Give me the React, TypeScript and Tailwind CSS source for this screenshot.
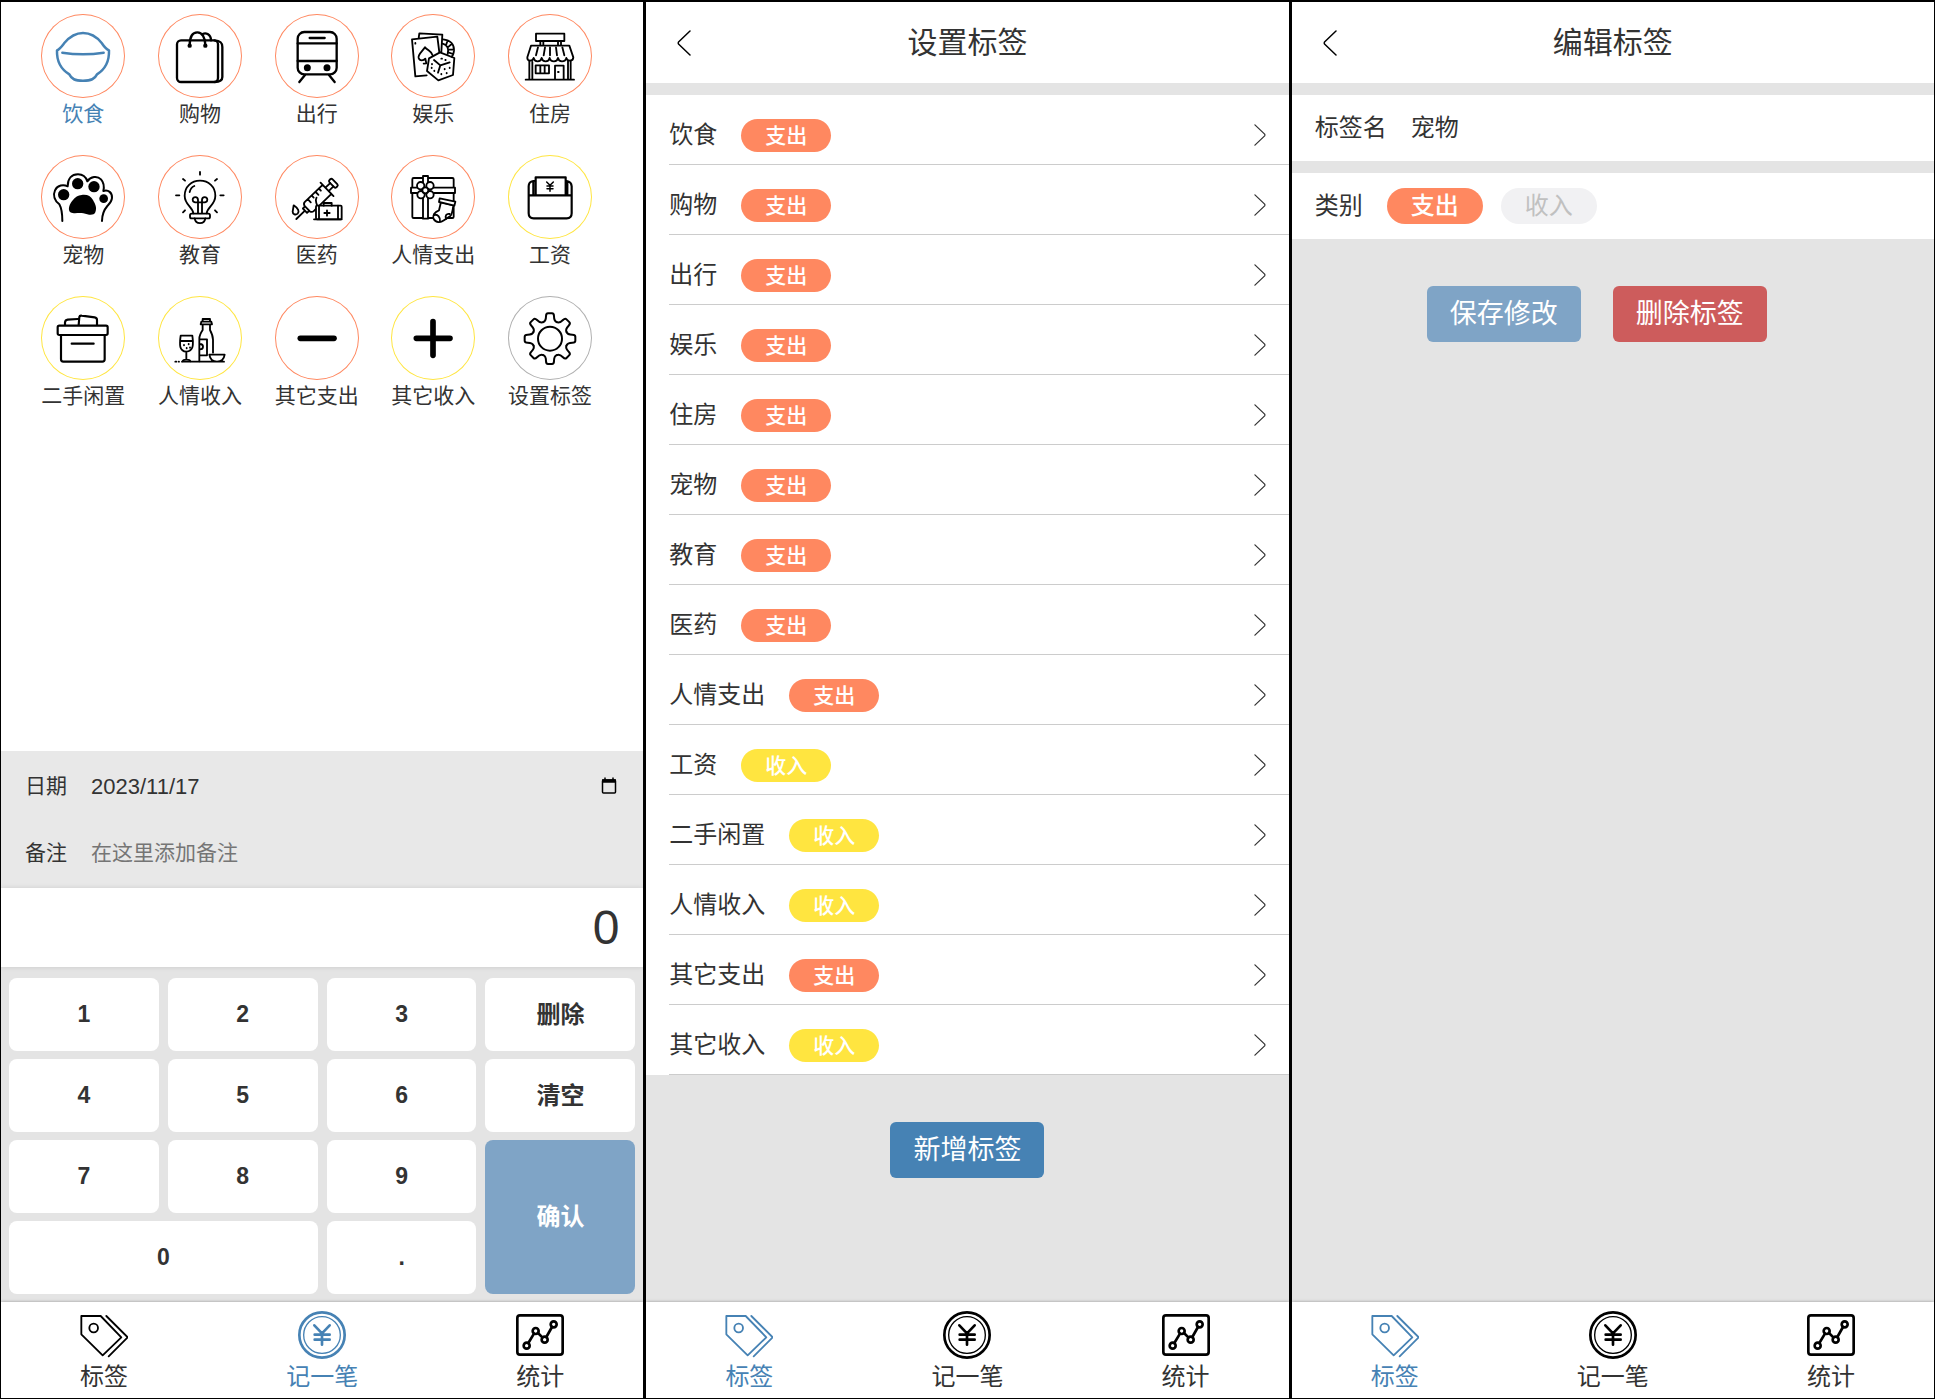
import { useState, type ReactNode } from "react";

type Kind = "支出" | "收入";

function TagSvg({ box, children, width = 6 }: { box: string; children: ReactNode; width?: number }) {
  return (
    <svg
      viewBox={box}
      className="size-full"
      fill="none"
      stroke="currentColor"
      strokeWidth={width}
      strokeLinecap="round"
      strokeLinejoin="round"
      aria-hidden="true"
    >
      {children}
    </svg>
  );
}

const BowlIcon = () => (
  <TagSvg box="123 42 252 252" width={7.5}>
    <path d="M187 158Q249 168 311 158" />
    <path d="M171 151C180 147 186 138 193 129C210 109 228 99 249 99C271 99 289 109 305 129C311 138 318 147 327 151C328 180 318 206 291 223C284 237 274 242 249 242C224 242 215 237 208 223C180 206 170 180 171 151Z" />
  </TagSvg>
);

const BagIcon = () => (
  <TagSvg box="474 42 252 252" width={7}>
    <rect x="531" y="121" width="123" height="125" rx="12" />
    <path d="M644 121C664 122 667 130 667 141V231Q667 246 644 246" />
    <path d="M569 136C569 110 578 97 592 97C606 97 616 112 616 136M608 102C614 99 619 100 623 102C630 106 633 112 633 121" />
    <circle cx="569" cy="137" r="3" />
    <circle cx="616" cy="137" r="3" />
  </TagSvg>
);

const TrainIcon = () => (
  <TagSvg box="14 12 252 252" width={7}>
    <rect x="82" y="66" width="117" height="127" rx="20" />
    <path d="M82 100H199M82 153H199M118 84H163M104 195L87 216M176 195L193 216" />
    <circle cx="111" cy="173" r="7" fill="currentColor" />
    <circle cx="170" cy="173" r="7" fill="currentColor" />
  </TagSvg>
);

const GamesIcon = () => (
  <TagSvg box="215 42 252 252" width={5.5}>
    <path d="M298 114L300 100L369 104L366 156M322 226L288 229L278 118L354 110L360 157" />
    <path d="M317 142C307 157 295 162 298 174C301 184 313 182 318 176L321 190M317 142C326 152 338 155 340 166M313 191L321 190" />
    <path d="M362 157L405 174L401 225L357 241L323 213L329 175Z" />
    <path d="M344 180L363 196L391 187M363 196L356 218" />
    <path d="M371 118C395 120 405 135 404 152C403 160 402 166 397 170M370 131C384 135 390 146 385 162M385 121L381 133M397 132L388 140M404 148L390 149M401 162L389 158" />
    <path d="M366 176h2M378 180h1M338 192v1M337 203v1M345 212v1M366 222v1M382 219v1M376 207v1M391 203v1M288 129v2" />
  </TagSvg>
);

const ShopIcon = () => (
  <TagSvg box="565 42 252 252" width={5.5}>
    <rect x="649" y="101" width="85" height="22" />
    <path d="M662 123v13M671 123v13M715 123v13M724 123v13M634 137H749L761 172Q761 182 751 182Q742 182 740 174Q738 184 727 184Q717 184 715 174Q713 184 703 184Q692 184 690 174Q688 184 678 184Q668 184 666 174Q664 184 654 184Q644 184 642 174Q640 182 631 182Q622 181 623 172Z" />
    <path d="M655 142L649 166M676 142L672 166M691 142V166M709 142L712 166M728 142L734 166" />
    <path d="M629 184V238M638 186V238M745 184V238M753 184V238M618 239H763M706 238V197H732V238M648 196H688V220H648ZM662 196V220M675 196V220M715 216h2" />
  </TagSvg>
);

const PawIcon = () => (
  <TagSvg box="123 465 252 252" width={6}>
    <path d="M187 663C187 640 186 627 178 613C164 602 158 586 165 571C173 555 190 553 203 559C203 536 215 523 234 523C250 523 258 532 262 544C272 529 292 527 303 538C312 548 313 560 310 573C325 568 337 578 336 594C335 606 328 612 322 618C310 632 306 645 306 663" />
    <g fill="currentColor" stroke="none">
      <circle cx="191" cy="584" r="17" />
      <circle cx="233" cy="551" r="17" />
      <circle cx="282" cy="560" r="17" />
      <circle cx="311" cy="596" r="13" />
      <path d="M245 585C262 583 272 588 279 600C285 611 292 622 286 637C281 648 266 645 250 640C235 637 224 643 211 637C202 628 209 612 217 602C226 591 234 586 245 585Z" />
    </g>
  </TagSvg>
);

const BulbIcon = () => (
  <TagSvg box="474 465 252 252" width={5.5}>
    <path d="M580 640C578 620 554 615 554 587C554 560 574 542 600 542C626 542 646 560 646 587C646 615 622 620 620 640M569 576C571 567 576 561 583 558M584 655C587 674 613 674 616 655" />
    <rect x="570" y="641" width="60" height="14" rx="5" />
    <path d="M594 639V600C594 589 578 589 578 599C578 607 586 608 594 607H606C614 608 622 607 622 599C622 589 606 589 606 600V639" />
    <path d="M600 516v8M549 537l6 5M651 537l-6 5M528 586h10M661 586h10M549 637l6-6M651 637l-6-6" />
  </TagSvg>
);

const MedicineIcon = () => (
  <TagSvg box="14 434 252 252" width={5.5}>
    <g transform="translate(78 626) rotate(-44)">
      <path d="M0 0H36M36 -9H45V9H36ZM45 -11Q47 -19 54 -19H128V19H54Q47 19 45 11ZM128 -28V28M128 -7H148M128 7H148M66 -19V-6M82 -19V-10M98 -19V-6M112 -19V-10M70 19C80 4 76 0 88 -4" />
      <rect x="148" y="-15" width="13" height="30" rx="5" />
    </g>
    <path d="M70 585C84 594 88 604 82 610C76 615 67 612 67 604Z" />
    <rect x="137" y="586" width="77" height="41" rx="3" fill="white" />
    <path d="M160 586V578H184V586M203 586V627M146 586V627M162 608H178M170 600V616M131 627H214" />
  </TagSvg>
);

const GiftIcon = () => (
  <TagSvg box="215 465 252 252" width={5.5}>
    <rect x="279" y="534" width="124" height="120" rx="4" />
    <rect x="311" y="528" width="15" height="128" fill="white" />
    <rect x="275" y="563" width="132" height="16" fill="white" />
    <g fill="white">
      <circle cx="304" cy="557" r="11" />
      <circle cx="332" cy="557" r="11" />
      <circle cx="305" cy="584" r="11" />
      <circle cx="332" cy="584" r="11" />
      <circle cx="318" cy="571" r="9" />
      <path d="M365 606L359 631C345 636 339 647 343 657C350 669 364 668 374 661L393 648C400 640 400 628 402 616Z" />
      <path d="M361 595L408 605L405 617L359 606Z" />
    </g>
    <path d="M345 645C355 642 364 652 362 665M381 656C376 648 381 640 391 642" />
  </TagSvg>
);

const WalletIcon = () => (
  <TagSvg box="565 465 252 252" width={6.5}>
    <path d="M648 543H641Q627 545 627 559V640Q627 655 642 655H741Q756 655 756 640V559Q755 545 741 543H738M627 586H756M648 586V532H738V586M641 545V586M743 545V586" />
    <path d="M681 546L691 556L701 546M691 556V574M682 558h18M682 566h18" strokeWidth="4.500" />
  </TagSvg>
);

const BoxIcon = () => (
  <TagSvg box="123 78 252 252" width={6.5}>
    <rect x="173" y="167" width="150" height="28" rx="5" />
    <path d="M183 195V268Q183 275 190 275H307Q314 275 314 268V195M215 221H281M195 165V157Q196 150 203 149L233 147M236 165L238 141Q239 136 245 137L284 142Q291 143 291 150V165" />
  </TagSvg>
);

const WineIcon = () => (
  <TagSvg box="474 78 252 252" width={5.5}>
    <path d="M542 197H577C581 225 580 243 559 245C538 243 538 225 542 197ZM540 213H579M559 245V268M548 274C550 267 569 267 571 274M552 225v1M566 222v1M560 234v1M570 232v1" />
    <path d="M608 155V147H630V155M604 155H634L636 163H602ZM608 165V180C600 192 598 198 598 206V274M630 165V180C637 193 639 199 639 209V248M598 208H621V256H598M600 222C612 222 612 238 600 238" />
    <path d="M628 254H674C672 267 664 275 651 275C638 275 630 267 628 254ZM546 275H672M526 275h3M536 275h1" />
  </TagSvg>
);

const MinusIcon = () => (
  <TagSvg box="0 2 252 252" width={17}>
    <path d="M76 129H177" />
  </TagSvg>
);

const PlusIcon = () => (
  <TagSvg box="0 2 252 252" width={17}>
    <path d="M76 129H177M126 79V180" />
  </TagSvg>
);

const GearIcon = () => (
  <TagSvg box="-126 -128 252 252" width={6}>
    <circle r="36" />
    {[0, 45, 90, 135, 180, 225, 270, 315].map((angle) => (
      <path
        key={angle}
        transform={`rotate(${angle})`}
        d="M-20.5 -49.5C-13 -52 -12 -58 -12 -67Q-12 -76 -6 -76H6Q12 -76 12 -67C12 -58 13 -52 20.5 -49.5"
      />
    ))}
  </TagSvg>
);

function Chevron({ direction }: { direction: "left" | "right" }) {
  return (
    <svg
      viewBox="0 0 14 26"
      className={direction === "left" ? "h-[26px] w-[14px]" : "h-[22px] w-3"}
      fill="none"
      stroke="currentColor"
      strokeWidth="1.5"
      strokeLinecap="round"
      strokeLinejoin="round"
      aria-hidden="true"
    >
      <path d={direction === "left" ? "M13 1L1.500 12Q1 13 1.500 14L13 25" : "M1 1L12.500 12Q13 13 12.500 14L1 25"} />
    </svg>
  );
}

const tags: { name: string; kind: Kind; icon: () => ReactNode }[] = [
  { name: "饮食", kind: "支出", icon: BowlIcon },
  { name: "购物", kind: "支出", icon: BagIcon },
  { name: "出行", kind: "支出", icon: TrainIcon },
  { name: "娱乐", kind: "支出", icon: GamesIcon },
  { name: "住房", kind: "支出", icon: ShopIcon },
  { name: "宠物", kind: "支出", icon: PawIcon },
  { name: "教育", kind: "支出", icon: BulbIcon },
  { name: "医药", kind: "支出", icon: MedicineIcon },
  { name: "人情支出", kind: "支出", icon: GiftIcon },
  { name: "工资", kind: "收入", icon: WalletIcon },
  { name: "二手闲置", kind: "收入", icon: BoxIcon },
  { name: "人情收入", kind: "收入", icon: WineIcon },
  { name: "其它支出", kind: "支出", icon: MinusIcon },
  { name: "其它收入", kind: "收入", icon: PlusIcon },
];

function TagButton({
  name,
  ring,
  active,
  onClick,
  children,
}: {
  name: string;
  ring: string;
  active?: boolean;
  onClick?: () => void;
  children: ReactNode;
}) {
  return (
    <button type="button" onClick={onClick} className={`flex flex-col items-center ${active ? "text-[#4682b4]" : "text-black"}`}>
      <span className={`size-[84px] rounded-full ring-1 ring-inset ${ring}`}>{children}</span>
      <span className={`text-[21px] leading-[31px] whitespace-nowrap ${active ? "" : "text-[#333]"}`}>{name}</span>
    </button>
  );
}

function NavLink({ label, active, children }: { label: string; active: boolean; children: ReactNode }) {
  return (
    <a href="#" className={`flex flex-col items-center ${active ? "text-[#4682b4]" : "text-black"}`}>
      <svg
        viewBox="0 0 144 144"
        className="size-12"
        fill="none"
        stroke="currentColor"
        strokeLinecap="round"
        strokeLinejoin="round"
        aria-hidden="true"
      >
        {children}
      </svg>
      <span className={`text-2xl leading-9 ${active ? "" : "text-[#333]"}`}>{label}</span>
    </a>
  );
}

function BottomNav({ active }: { active: string }) {
  return (
    <nav className="z-10 flex h-24 shrink-0 items-start justify-around bg-white pt-[9px] shadow-[0_0_3px_rgba(0,0,0,0.35)]">
      <NavLink label="标签" active={active === "标签"}>
        <path d="M4 15H62L124 79L68 133L4 70ZM79 15L143 79L86 136" strokeWidth="5.500" />
        <circle cx="41" cy="51" r="13" strokeWidth="5.500" />
      </NavLink>
      <NavLink label="记一笔" active={active === "记一笔"}>
        <circle cx="72" cy="72" r="68" strokeWidth="8" />
        <circle cx="72" cy="72" r="55" strokeWidth="4" />
        <path d="M49 43L72 67L95 43M72 67V101M50 71H95M50 86H95" strokeWidth="8" />
      </NavLink>
      <NavLink label="统计" active={active === "统计"}>
        <rect x="4" y="13" width="136" height="118" rx="8" strokeWidth="8" />
        <g strokeWidth="8">
          <circle cx="32" cy="104" r="9" />
          <circle cx="59" cy="60" r="9" />
          <circle cx="86" cy="86" r="9" />
          <circle cx="113" cy="40" r="9" />
          <path d="M37 96L54 68M66 66L79 79M91 78L108 48" />
        </g>
      </NavLink>
    </nav>
  );
}

function Header({ title }: { title: string }) {
  return (
    <header className="grid h-[81px] shrink-0 grid-cols-[48px_1fr_48px] items-center bg-white px-6 text-[#333]">
      <button type="button" aria-label="返回" className="flex h-12 items-center pl-[7px] text-black">
        <Chevron direction="left" />
      </button>
      <h1 className="text-center text-[30px] leading-10">{title}</h1>
    </header>
  );
}

const keys = [
  ["1", ""],
  ["2", ""],
  ["3", ""],
  ["删除", ""],
  ["4", ""],
  ["5", ""],
  ["6", ""],
  ["清空", ""],
  ["7", ""],
  ["8", ""],
  ["9", ""],
  ["确认", "row-span-2"],
  ["0", "col-span-2"],
  [".", ""],
];

function RecordPanel() {
  const [selected, setSelected] = useState("饮食");
  const [amount, setAmount] = useState("0");
  const press = (key: string) => {
    if (key === "确认") return;
    if (key === "清空") return setAmount("0");
    if (key === "删除") return setAmount(amount.length > 1 ? amount.slice(0, -1) : "0");
    if (key === "." && amount.includes(".")) return;
    setAmount(amount === "0" && key !== "." ? key : amount + key);
  };
  return (
    <section className="flex flex-col bg-white">
      <div className="grid flex-1 grid-cols-5 content-start gap-y-[26px] pt-3 pr-[35px] pl-6">
        {tags.map(({ name, kind, icon: Icon }) => (
          <TagButton
            key={name}
            name={name}
            ring={kind === "支出" ? "ring-[#ff8860]" : "ring-[#ffe540]"}
            active={selected === name}
            onClick={() => setSelected(name)}
          >
            <Icon />
          </TagButton>
        ))}
        <TagButton name="设置标签" ring="ring-[#b0b0b0]">
          <GearIcon />
        </TagButton>
      </div>
      <div className="bg-[#e8e8e8] px-6 pt-0.5 pb-0.5 text-[#333]">
        <div className="flex h-[66px] items-center gap-6">
          <label htmlFor="date" className="text-[21px]">日期</label>
          <input id="date" defaultValue="2023/11/17" className="min-w-0 flex-1 bg-transparent text-[22px] outline-none" />
          <button type="button" aria-label="选择日期" className="mr-0.5 text-black">
            <svg viewBox="0 0 16 18" className="h-[18px] w-4" fill="none" stroke="currentColor" strokeWidth="1.500" aria-hidden="true">
              <rect x="1.500" y="3" width="13" height="13" rx="1" />
              <path d="M1 4H15" strokeWidth="3.500" />
              <path d="M4 0.500V4M12 0.500V4" />
            </svg>
          </button>
        </div>
        <div className="flex h-[67px] items-center gap-6 text-[21px]">
          <label htmlFor="memo">备注</label>
          <input
            id="memo"
            placeholder="在这里添加备注"
            className="min-w-0 flex-1 bg-transparent outline-none placeholder:text-[#757575]"
          />
        </div>
      </div>
      <output className="z-10 flex h-[79px] items-center justify-end bg-white px-6 text-5xl text-[#333] shadow-[0_0_5px_rgba(0,0,0,0.12)]">
        {amount}
      </output>
      <div className="grid auto-rows-[73px] grid-cols-4 gap-x-[9px] gap-y-2 bg-[#e4e4e4] px-2 pt-[11px] pb-2">
        {keys.map(([key, span]) => (
          <button
            key={key}
            type="button"
            onClick={() => press(key)}
            className={`rounded-lg font-bold ${/[0-9.]/.test(key) ? "text-[23px]" : "text-2xl"} ${span} ${key === "确认" ? "bg-[#7fa4c6] text-white" : "bg-white text-[#333]"}`}
          >
            {key}
          </button>
        ))}
      </div>
      <BottomNav active="记一笔" />
    </section>
  );
}

function TagListPanel() {
  return (
    <section className="flex flex-col bg-[#e4e4e4]">
      <Header title="设置标签" />
      <ul className="mt-3 bg-white pl-[23px]">
        {tags.map(({ name, kind }) => (
          <li key={name} className="border-b border-[#ccc]">
            <a href="#" className="flex h-[69px] items-center gap-6 pt-[11px] pr-[23px] text-[#333]">
              <span className="text-2xl">{name}</span>
              <span
                className={`rounded-full px-6 text-[21px] leading-[33px] font-medium text-white ${kind === "支出" ? "bg-[#ff8860]" : "bg-[#ffe540]"}`}
              >
                {kind}
              </span>
              <span className="ml-auto">
                <Chevron direction="right" />
              </span>
            </a>
          </li>
        ))}
      </ul>
      <div className="flex flex-1 items-start justify-center pt-[47px]">
        <button type="button" className="h-14 rounded-md bg-[#4682b4] px-[23px] text-[27px] text-white">
          新增标签
        </button>
      </div>
      <BottomNav active="标签" />
    </section>
  );
}

function TagEditPanel() {
  const [kind, setKind] = useState<Kind>("支出");
  return (
    <section className="flex flex-col bg-[#e4e4e4]">
      <Header title="编辑标签" />
      <div className="mt-3 flex h-[66px] items-center gap-6 bg-white px-[23px] text-2xl text-[#333]">
        <label htmlFor="tag-name">标签名</label>
        <input id="tag-name" defaultValue="宠物" className="min-w-0 flex-1 outline-none" />
      </div>
      <div className="mt-3 flex h-[66px] items-center bg-white px-[23px] text-2xl text-[#333]">
        <span className="mr-6">类别</span>
        {(["支出", "收入"] as Kind[]).map((option) => (
          <button
            key={option}
            type="button"
            aria-pressed={kind === option}
            onClick={() => setKind(option)}
            className={`mr-[18px] rounded-full px-6 leading-9 ${kind === option ? "bg-[#ff8860] font-medium text-white" : "bg-[#f1f1f3] text-[#c0c0c0]"}`}
          >
            {option}
          </button>
        ))}
      </div>
      <div className="flex flex-1 items-start justify-center pt-[47px]">
        <button type="button" className="mr-8 h-14 rounded-md bg-[#7fa4c6] px-[23px] text-[27px] text-white">
          保存修改
        </button>
        <button type="button" className="mr-8 h-14 rounded-md bg-[#cd5c5c] px-[23px] text-[27px] text-white">
          删除标签
        </button>
      </div>
      <BottomNav active="标签" />
    </section>
  );
}

export default function App() {
  return (
    <main
      lang="zh-CN"
      className="grid min-h-screen grid-cols-3 gap-[3px] bg-black px-px pt-0.5 pb-px font-['Liberation_Sans','Noto_Sans_CJK_SC',sans-serif]"
    >
      <RecordPanel />
      <TagListPanel />
      <TagEditPanel />
    </main>
  );
}
